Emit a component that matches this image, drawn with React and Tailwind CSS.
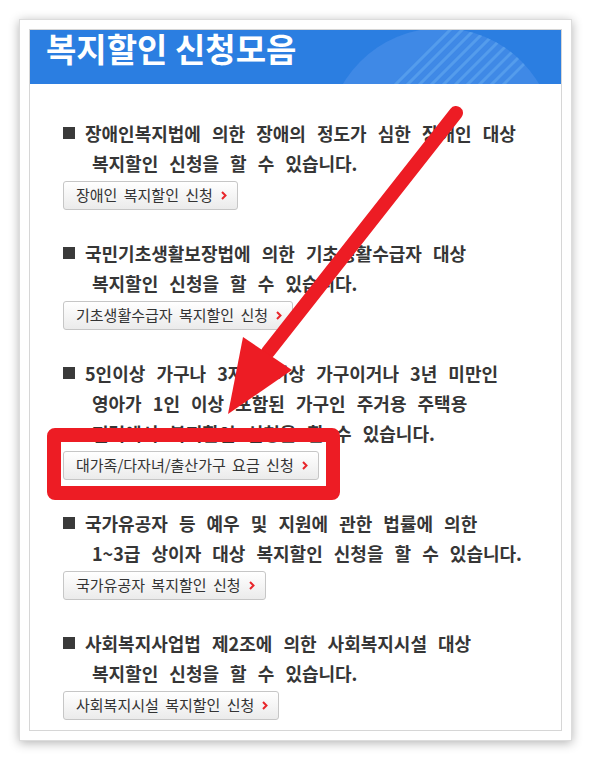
const sections = [
  {
    lines: [
      "장애인복지법에 의한 장애의 정도가 심한 장애인 대상",
      "복지할인 신청을 할 수 있습니다.",
    ],
    button: "장애인 복지할인 신청",
  },
  {
    lines: [
      "국민기초생활보장법에 의한 기초생활수급자 대상",
      "복지할인 신청을 할 수 있습니다.",
    ],
    button: "기초생활수급자 복지할인 신청",
  },
  {
    lines: [
      "5인이상 가구나 3자녀 이상 가구이거나 3년 미만인",
      "영아가 1인 이상 포함된 가구인 주거용 주택용",
      "전력에서 복지할인 신청을 할 수 있습니다.",
    ],
    button: "대가족/다자녀/출산가구 요금 신청",
  },
  {
    lines: [
      "국가유공자 등 예우 및 지원에 관한 법률에 의한",
      "1~3급 상이자 대상 복지할인 신청을 할 수 있습니다.",
    ],
    button: "국가유공자 복지할인 신청",
  },
  {
    lines: [
      "사회복지사업법 제2조에 의한 사회복지시설 대상",
      "복지할인 신청을 할 수 있습니다.",
    ],
    button: "사회복지시설 복지할인 신청",
  },
];

const HeaderDeco = () => (
  <svg
    className="absolute inset-0"
    width="531"
    height="54"
    viewBox="0 0 531 54"
  >
    <defs>
      <clipPath id="deco">
        <circle cx="411" cy="112" r="114" />
      </clipPath>
    </defs>
    <circle cx="411" cy="112" r="114" fill="#3f89e6" />
    <g clipPath="url(#deco)" stroke="#549cec" strokeWidth="3">
      <line x1="340" y1="80" x2="430" y2="-10" />
      <line x1="352" y1="80" x2="442" y2="-10" />
      <line x1="364" y1="80" x2="454" y2="-10" />
      <line x1="376" y1="80" x2="466" y2="-10" />
      <line x1="388" y1="80" x2="478" y2="-10" />
      <line x1="400" y1="80" x2="490" y2="-10" />
      <line x1="412" y1="80" x2="502" y2="-10" />
      <line x1="424" y1="80" x2="514" y2="-10" />
      <line x1="436" y1="80" x2="526" y2="-10" />
      <line x1="448" y1="80" x2="538" y2="-10" />
    </g>
  </svg>
);

const Chevron = () => (
  <svg width="6" height="9" viewBox="0 0 6 9" className="ml-[8px]">
    <polyline
      points="1,1 4.5,4.5 1,8"
      fill="none"
      stroke="#e8262b"
      strokeWidth="2"
    />
  </svg>
);

const App = () => {
  return (
    <div className="relative w-[592px] h-[761px] bg-white pt-[19px] pl-[19px] font-['Noto_Sans_CJK_KR',sans-serif]">
      <div className="w-[553px] h-[722px] bg-white border border-[#dcdcdc] p-[9px] shadow-[0px_2px_10px_rgba(0,0,0,0.3)]">
        <div className="h-full border border-[#d6d6d6]">
          <div className="relative h-[54px] bg-[#2b7ee1]">
            <HeaderDeco />
            <h1 className="relative pl-[16px] text-[33px] leading-[36px] font-bold text-white">
              복지할인 신청모음
            </h1>
          </div>

          <div className="pl-[33px] pt-[34px] flex flex-col gap-[28px]">
            {sections.map((s, i) => (
              <div key={i}>
                {s.lines.map((line, j) => (
                  <div
                    key={j}
                    className={`flex items-center h-[30px] text-[18px] font-bold text-[#363636] [word-spacing:7px] whitespace-nowrap ${
                      j === 0 ? "" : "pl-[29px]"
                    }`}
                  >
                    {j === 0 && (
                      <span className="inline-block w-[12px] h-[12px] bg-[#3a3a3a] mr-[10px]" />
                    )}
                    {line}
                  </div>
                ))}
                <button className="mt-[3px] h-[29px] flex items-center pl-[12px] pr-[10px] border border-[#c6c6c6] rounded-[3px] bg-gradient-to-b from-white to-[#ebebeb] text-[15px] text-[#333] [word-spacing:3px] whitespace-nowrap">
                  {s.button}
                  <Chevron />
                </button>
              </div>
            ))}
          </div>
        </div>
      </div>

      <div className="absolute left-[47px] top-[428px] w-[293px] h-[72px] border-[14px] border-[#ed1c24] rounded-[8px]" />

      <svg
        className="absolute inset-0 pointer-events-none"
        width="592"
        height="761"
        viewBox="0 0 592 761"
      >
        <line
          x1="456"
          y1="113"
          x2="268"
          y2="352"
          stroke="#ed1c24"
          strokeWidth="14"
          strokeLinecap="round"
        />
        <polygon points="228,414 243,337 292,370" fill="#ed1c24" />
      </svg>
    </div>
  );
};

export default App;
